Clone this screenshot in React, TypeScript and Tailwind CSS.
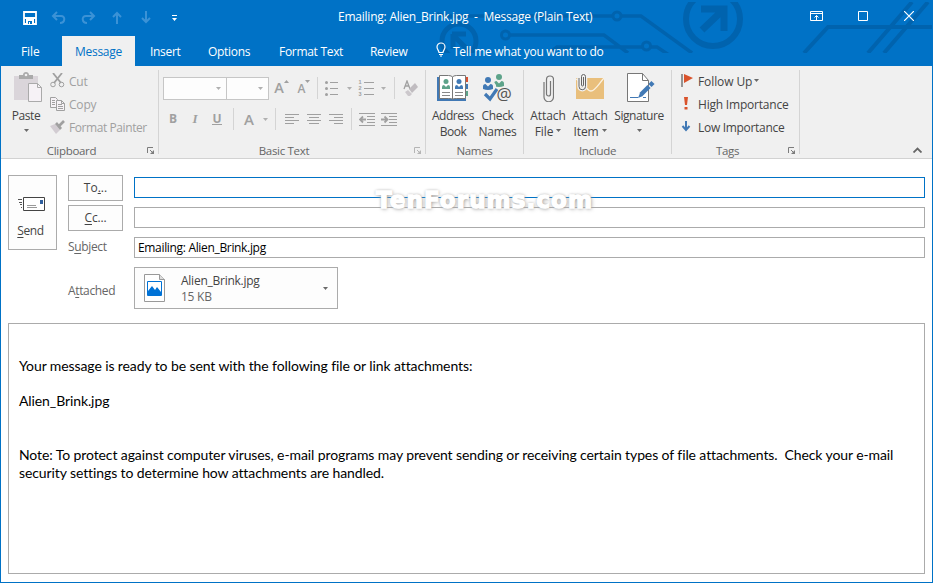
import type { ReactNode } from "react";

type Box = { w: number; h: number; className?: string; children: ReactNode };

function Svg({ w, h, className = "", children }: Box) {
  return (
    <svg width={w} height={h} viewBox={`0 0 ${w} ${h}`} fill="none" className={`block shrink-0 ${className}`}>
      {children}
    </svg>
  );
}

function Caret({ className = "text-[#6a6a6a]" }: { className?: string }) {
  return (
    <Svg w={5} h={3} className={className}>
      <path d="M0 0h5L2.5 3z" fill="currentColor" />
    </Svg>
  );
}

function Circuit() {
  return (
    <svg width="933" height="66" viewBox="0 0 933 66" fill="none" className="pointer-events-none absolute left-0 top-0" stroke="#0063ae" strokeWidth="4">
      <defs>
        <clipPath id="band"><rect y="2" width="932" height="51" /></clipPath>
      </defs>
      <g clipPath="url(#band)">
        <circle cx="459" cy="41" r="17" strokeWidth="5" />
        <path d="M452 34h14M454 36l15 15M453 34v15" strokeWidth="5" />
        <path d="M437 14l8 2h167M622 16h19l51 37" strokeWidth="3.5" />
        <circle cx="617" cy="16" r="4" strokeWidth="3" />
        <circle cx="505.5" cy="35" r="4" strokeWidth="3" />
        <path d="M510 35h94l24 18M549 53l8-6h85M651 47h6l12 8" strokeWidth="3.5" />
        <circle cx="646.5" cy="46" r="4" strokeWidth="3" />
        <circle cx="713" cy="19" r="27" strokeWidth="6" />
        <path d="M701 9h23v22M702 30l21-20" strokeWidth="7" />
        <path d="M804 53l24-26h104M868 53l44-51M884 53l44-51" />
      </g>
    </svg>
  );
}

function TitleBar() {
  return (
    <div className="relative flex h-9 text-white">
      <div className="flex h-[35px] w-[337px] items-center pl-[22px]">
        <Svg w={14} h={14}>
          <path d="M1 1h12v12H1z" stroke="#fff" strokeWidth="1.8" />
          <path d="M1 6h12v2H1zM3 8h8v5H3z" fill="#fff" />
          <path d="M5 10h4v3H7v-2H6v2H5z" fill="#0072c6" />
        </Svg>
        <Svg w={16} h={14} className="ml-[14px] text-[#3b92d6]">
          <path d="M6 1L2 5l4 4M2 5h8c5 0 4 7-1 7" stroke="currentColor" strokeWidth="2" />
        </Svg>
        <Svg w={16} h={14} className="ml-[13px] text-[#3b92d6]">
          <path d="M10 1l4 4-4 4M14 5H6C1 5 2 12 7 12" stroke="currentColor" strokeWidth="2" />
        </Svg>
        <Svg w={10} h={13} className="ml-4 text-[#3b92d6]">
          <path d="M5 13V2M1 6l4-4 4 4" stroke="currentColor" strokeWidth="2" />
        </Svg>
        <Svg w={10} h={13} className="ml-[19px] text-[#3b92d6]">
          <path d="M5 0v11M1 7l4 4 4-4" stroke="currentColor" strokeWidth="2" />
        </Svg>
        <Svg w={5} h={6} className="ml-[21px]">
          <path d="M0 0h5v1H0zM0 3h5L2.5 6z" fill="#fff" />
        </Svg>
      </div>
      <div className="h-8 w-[256px] whitespace-pre leading-[33px] tracking-[-0.23px]">Emailing: Alien_Brink.jpg  -  Message (Plain Text)</div>
      <div className="flex h-[32px] flex-1 items-center pl-[216px]">
        <Svg w={13} h={10}>
          <path d="M.5.5h12v9H.5zM0 2.5h13M6.5 9V4.5M4.5 6.5l2-2 2 2" stroke="#fff" />
        </Svg>
        <Svg w={10} h={10} className="ml-[35px]"><path d="M.5.5h9v9H.5z" stroke="#fff" /></Svg>
        <Svg w={10} h={10} className="ml-9"><path d="M0 0l10 10M10 0L0 10" stroke="#fff" strokeWidth="1.2" /></Svg>
      </div>
    </div>
  );
}

function Tabs() {
  return (
    <div className="relative flex h-[30px] text-white leading-[31px]">
      <div className="w-[61px] pl-5 tracking-[-0.1px]">File</div>
      <div className="w-[73px] bg-[#f0f0f0] text-center tracking-[-0.3px] text-[#0072c6]">Message</div>
      <div className="w-[58px] pl-[15px] tracking-[-0.3px]">Insert</div>
      <div className="w-[71px] pl-[15px] tracking-[-0.3px]">Options</div>
      <div className="w-[91px] pl-[15px] tracking-[-0.3px]">Format Text</div>
      <div className="w-[81px] pl-[15px] tracking-[-0.3px]">Review</div>
      <Svg w={10} h={15} className="mt-[6px]">
        <path d="M3 10.5C3 8.5 1 7.5 1 5a4 4 0 018 0c0 2.5-2 3.5-2 5.5zM3 12.500h4M4 14h2" stroke="#fff" strokeWidth="1.2" />
      </Svg>
      <div className="pl-[7px] tracking-[-0.27px]">Tell me what you want to do</div>
    </div>
  );
}

function Launcher({ className = "text-[#7c7c7c]" }: { className?: string }) {
  return (
    <Svg w={7} h={7} className={className}>
      <path d="M.5 6V.5H6M3 3l3 3" stroke="currentColor" />
      <path d="M7 3v4H3z" fill="currentColor" />
    </Svg>
  );
}

function Group({ label, width, children, launcher }: { label: string; width: string; children: ReactNode; launcher?: ReactNode }) {
  return (
    <>
      <div className={`flex shrink-0 flex-col ${width}`}>
        <div className="h-[76px]">{children}</div>
        <div className="flex h-4 items-center leading-4 text-[#666]">
          <span className="-mb-px flex-1 pt-px text-center text-[11.5px] tracking-[-0.3px]">{label}</span>
          {launcher && <span className="flex w-4 justify-center">{launcher}</span>}
        </div>
      </div>
      <div className="my-1 w-px shrink-0 bg-[#d4d4d4]" />
    </>
  );
}

function Tall({ width, icon, first, second, caret, tracking = "tracking-[-0.1px]" }: { width: string; icon: ReactNode; first: string; second?: string; caret?: boolean; tracking?: string }) {
  return (
    <div className={`flex shrink-0 flex-col items-center whitespace-nowrap leading-4 text-[#444] ${width} ${tracking}`}>
      <div className="flex h-[42px] items-center justify-center pt-px">{icon}</div>
      <div>{first}</div>
      <div className="flex h-4 items-center gap-[3px]">{second}{caret && <Caret className="mb-[3px] text-[#6a6a6a]" />}</div>
    </div>
  );
}

function Command({ icon, label, tracking, caret }: { icon: ReactNode; label: string; tracking: string; caret?: boolean }) {
  return (
    <div className="flex items-center">
      {icon}
      <span className={`-mb-px pl-1 pt-px ${tracking}`}>{label}</span>
      {caret && <Caret className="ml-[2px] text-[#6a6a6a]" />}
    </div>
  );
}

const lineSet = (xs: [number, number][]) => xs.map(([a, b], i) => `M${a} ${i * 3 + 0.5}H${b}`).join("");

function Align({ rows }: { rows: [number, number][] }) {
  return (
    <Cell w="w-[22px]">
      <Svg w={14} h={10}><path d={lineSet(rows)} stroke="#a0a0a0" /></Svg>
    </Cell>
  );
}

function Cell({ w, children }: { w: string; children: ReactNode }) {
  return <div className={`flex h-full shrink-0 items-center justify-center ${w}`}>{children}</div>;
}

function Rule({ w }: { w: string }) {
  return <Cell w={w}><div className="h-[22px] w-px shrink-0 bg-[#d4d4d4]" /></Cell>;
}

function Combo({ w }: { w: string }) {
  return (
    <div className={`flex h-[23px] shrink-0 items-center justify-end border border-[#c6c6c6] bg-[#fdfdfd] pr-[5px] ${w}`}>
      <Caret className="text-[#b0b0b0]" />
    </div>
  );
}

function Indent({ right }: { right?: boolean }) {
  return (
    <Cell w="w-[22px]">
      <Svg w={16} h={13}>
        <path d="M0 .5h16M8 3.500h8M8 6.500h8M8 9.500h8M0 12.500h16" stroke="#a0a0a0" />
        <path d={right ? "M0 6.500h6M3.500 3.500l3 3-3 3" : "M7 6.500H1M4 3.500l-3 3 3 3"} stroke="#a0a0a0" strokeWidth="1.8" />
      </Svg>
    </Cell>
  );
}

function Clipboard() {
  return (
    <Group label="Clipboard" width="w-[157px]" launcher={<Launcher />}>
      <div className="flex">
        <Tall width="w-[49px]" first="Paste" caret tracking="tracking-[-0.4px] pl-px" icon={
          <Svg w={29} h={31} className="ml-[5px]">
            <path d="M0 4h24v24H0z" fill="#dad5da" />
            <path d="M5 7V3h4c0-4 6-4 6 0h4v4z" fill="#aaa" />
            <circle cx="12" cy="3" r="1.3" fill="#f0f0f0" />
            <path d="M14.5 11.500h9l4 4v14h-13z" fill="#f6f2f6" stroke="#aaa" />
            <path d="M23.5 11.500v4h4" stroke="#aaa" />
          </Svg>
        } />
        <div className="pt-[3px] leading-[23px] text-[#a0a0a0]">
          <Command label="Cut" tracking="tracking-[-0.2px]" icon={
            <Svg w={15} h={15}>
              <path d="M3 0l8 10M12 0L4 10" stroke="#a0a0a0" strokeWidth="1.8" />
              <circle cx="3" cy="11.5" r="2.3" stroke="#a0a0a0" /><circle cx="11.5" cy="11.5" r="2.3" stroke="#a0a0a0" />
            </Svg>
          } />
          <Command label="Copy" tracking="tracking-[-0.2px]" icon={
            <Svg w={15} h={14}>
              <path d="M.5.5h5l2 2v8h-7z" fill="#f6f2f6" stroke="#a0a0a0" />
              <path d="M2 3.500h3M2 5.500h3M2 7.500h3" stroke="#a0a0a0" />
              <path d="M6.5 3.500h5l3 3v7h-8z" fill="#f6f2f6" stroke="#a0a0a0" />
              <path d="M11.5 3.500v3h3M8 7.500h4M8 9.500h5M8 11.500h5" stroke="#a0a0a0" />
            </Svg>
          } />
          <Command label="Format Painter" tracking="tracking-[-0.42px]" icon={
            <Svg w={15} h={14}>
              <path d="M0 6l5-2 5 6-4 4z" fill="#d2ccd2" />
              <path d="M5 4l2-2 5 6-2 2z" fill="#a0a0a0" />
              <path d="M9 6l5-5" stroke="#a0a0a0" strokeWidth="2.6" />
            </Svg>
          } />
        </div>
      </div>
    </Group>
  );
}

function BasicText() {
  return (
    <Group label="Basic Text" width="w-[266px]" launcher={<Launcher className="text-[#b5b5b5]" />}>
      <div className="flex h-[44px] items-center pl-1 text-[#a0a0a0]">
        <Combo w="w-[64px]" />
        <Combo w="-ml-px w-[43px]" />
        <Cell w="w-6"><span className="pl-px text-[14.5px] font-semibold">A</span><Svg w={5} h={3} className="mb-[13px]"><path d="M0 3l2.5-3L5 3z" fill="#a0a0a0" /></Svg></Cell>
        <Cell w="w-[22px]"><span className="pt-[2px] text-[12px] font-semibold">A</span><Svg w={5} h={3} className="mb-[13px]"><path d="M0 0l2.5 3L5 0z" fill="#a0a0a0" /></Svg></Cell>
        <Rule w="w-1" />
        <Cell w="w-[26px]">
          <Svg w={14} h={15}>
            <path d="M5 1.500h8M5 7.500h8M5 13.500h8" stroke="#a0a0a0" />
            <circle cx="1.5" cy="1.5" r="1.5" fill="#a0a0a0" /><circle cx="1.5" cy="7.5" r="1.5" fill="#a0a0a0" /><circle cx="1.5" cy="13.5" r="1.5" fill="#a0a0a0" />
          </Svg>
        </Cell>
        <Cell w="w-2"><Caret className="text-[#b0b0b0]" /></Cell>
        <Cell w="w-[26px]">
          <div className="flex flex-col font-['Liberation_Sans',sans-serif] text-[5.5px] font-bold leading-[6px]"><span>1</span><span>2</span><span>3</span></div>
          <Svg w={10} h={15} className="ml-[2px]"><path d="M0 1.500h10M0 7.500h10M0 13.500h10" stroke="#a0a0a0" /></Svg>
        </Cell>
        <Cell w="w-2"><Caret className="text-[#b0b0b0]" /></Cell>
        <Rule w="w-[14px]" />
        <Cell w="w-[18px]">
          <Svg w={15} h={16}>
            <path d="M1 9l3-8 3 8M2 6h4" stroke="#a0a0a0" strokeWidth="1.3" />
            <path d="M6 9l6-6 3 4-6 6z" fill="#c0bcc0" />
            <path d="M2 12l3-2 4 4-2 2H5z" fill="#ccc8cc" />
          </Svg>
        </Cell>
      </div>
      <div className="flex h-[18px] items-center pl-[3px] text-[#a0a0a0]">
        <Cell w="w-[22px]"><b>B</b></Cell>
        <Cell w="w-[22px]"><i className="font-['Liberation_Serif',serif] text-[13px] font-bold">I</i></Cell>
        <Cell w="w-[22px]"><b className="border-b border-[#a0a0a0] leading-[11px]">U</b></Cell>
        <Rule w="w-[10px]" />
        <Cell w="w-[22px]"><span className="text-[15px] font-semibold">A</span></Cell>
        <Cell w="w-[10px]"><Caret className="text-[#b0b0b0]" /></Cell>
        <Rule w="w-[11px]" />
        <Align rows={[[0, 14], [0, 9], [0, 14], [0, 9]]} />
        <Align rows={[[0, 14], [2, 12], [0, 14], [2, 12]]} />
        <Align rows={[[0, 14], [5, 14], [0, 14], [5, 14]]} />
        <Rule w="w-[9px]" />
        <Indent />
        <Indent right />
      </div>
    </Group>
  );
}

function Person({ x, y, color }: { x: number; y: number; color: string }) {
  return (
    <g transform={`translate(${x} ${y})`} fill={color}>
      <circle cx="5" cy="3" r="3" />
      <path d="M0 12V9.500q0-2.500 2.500-2.500L5 9.500 7.500 7q2.500 0 2.500 2.500V12q-5 2-10 0z" />
    </g>
  );
}

function Names() {
  return (
    <Group label="Names" width="w-[97px]">
      <div className="flex pl-[2px]">
        <Tall width="w-[50px]" first="Address" second="Book" tracking="tracking-[-0.45px]" icon={
          <Svg w={31} h={27} className="mr-[2px]">
            <path d="M0 3h29v24H0z" fill="#4179b5" />
            <path d="M27 3h4v5h-4z" fill="#d95030" /><path d="M27 10h4v5h-4z" fill="#4179b5" /><path d="M27 17h4v5h-4z" fill="#5da38a" />
            <path d="M2.500 1.500h9q4 0 4 2 0-2 4-2h9v23h-9q-4 0-4 1 0-1-4-1h-9z" fill="#fff" stroke="#777" />
            <path d="M15.500 3v22" stroke="#777" />
            <g transform="translate(5 5)"><circle cx="4" cy="2.500" r="2.500" fill="#5da38a" /><path d="M0 10V8q0-2 2-2l2 2 2-2q2 0 2 2v2z" fill="#5da38a" /></g>
            <g transform="translate(18 5)"><circle cx="4" cy="2.500" r="2.500" fill="#4179b5" /><path d="M0 10V8q0-2 2-2l2 2 2-2q2 0 2 2v2z" fill="#4179b5" /></g>
            <path d="M5 18.500h8M5 21.500h8M18 18.500h8M18 21.500h8" stroke="#888" />
          </Svg>
        } />
        <Tall width="w-[39px]" first="Check" second="Names" tracking="tracking-[-0.3px]" icon={
          <div className="relative pt-[2px]">
            <Svg w={31} h={31} className="ml-px">
              <Person x={11} y={1} color="#5da38a" />
              <path d="M-1 16V12q1-9 6-9t6 6l2 3v5z" fill="#f0f0f0" />
              <Person x={0} y={4} color="#4179b5" />
              <path d="M2 21l5 5 7-10" stroke="#f0f0f0" strokeWidth="6" />
              <path d="M2 21l5 5 7-10" stroke="#4179b5" strokeWidth="3.2" />
              <circle cx="23" cy="23" r="8.5" fill="#f0f0f0" />
            </Svg>
            <span className="absolute left-[15px] top-[13px] text-[17px] leading-5 tracking-normal text-[#555]">@</span>
          </div>
        } />
      </div>
    </Group>
  );
}

function Clip() {
  return (
    <Svg w={11} h={28}>
      <path d="M7.500 7v13a2 2 0 01-4 0V5.500a3.500 3.500 0 017 0V23a4.500 4.500 0 01-9.500 0V8" stroke="#777" strokeWidth="1.2" />
    </Svg>
  );
}

function Include() {
  return (
    <Group label="Include" width="w-[147px]">
      <div className="flex pl-[3px]">
        <Tall width="w-[42px]" first="Attach" second="File" caret icon={<Clip />} />
        <Tall width="w-[42px]" first="Attach" second="Item" caret icon={
          <Svg w={29} h={29} className="ml-px">
            <path d="M0 5h28v21H0z" fill="#e9bf7c" />
            <path d="M0 6c11 5 10 12 15 12 4 0 7-6 13-13" stroke="#fbf1df" strokeWidth="1.3" />
            <path d="M7.500 4v8a1 1 0 01-2 0V3.500a2 2 0 014 0v10a3 3 0 01-6.500 0V5" stroke="#f0f0f0" strokeWidth="3.5" />
            <path d="M7.500 4v8a1 1 0 01-2 0V3.500a2 2 0 014 0v10a3 3 0 01-6.500 0V5" stroke="#666" />
          </Svg>
        } />
        <Tall width="w-[56px]" first="Signature" caret tracking="tracking-[-0.45px]" icon={
          <Svg w={28} h={29} className="ml-[4px]">
            <path d="M.5.5h15l6 7v21H.5z" fill="#fff" stroke="#777" />
            <path d="M15.500.5v7h6" stroke="#777" />
            <path d="M3 24.500h8M16 24.500h3" stroke="#4179b5" />
            <path d="M11 25l2-5 3 3z" fill="#4179b5" />
            <path d="M14 21.500l8-8" stroke="#4179b5" strokeWidth="4.5" />
            <path d="M23 12.500l3-3" stroke="#4179b5" strokeWidth="4.5" />
          </Svg>
        } />
      </div>
    </Group>
  );
}

function Tags() {
  return (
    <Group label="Tags" width="w-[127px]" launcher={<Launcher />}>
      <div className="pl-[9px] pt-[3px] leading-[23px] text-[#444]">
        <Command label="Follow Up" caret tracking="tracking-[-0.1px]" icon={
          <Svg w={13} h={15}><path d="M1 1v13" stroke="#777" strokeWidth="1.5" /><path d="M3 1l9 4-9 5z" fill="#d9532c" /></Svg>
        } />
        <Command label="High Importance" tracking="tracking-[-0.2px]" icon={
          <Svg w={13} h={13}><path d="M3 0h4L6 8H4zM3.500 10h3v2.500h-3z" fill="#d9532c" /></Svg>
        } />
        <Command label="Low Importance" tracking="tracking-[-0.3px]" icon={
          <Svg w={13} h={13}><path d="M5 1v9M1.500 6L5 10l3.500-4" stroke="#4179b5" strokeWidth="2" /></Svg>
        } />
      </div>
    </Group>
  );
}

function Ribbon() {
  return (
    <div className="relative flex h-[93px] border-b border-[#d2d2d2] bg-[#f0f0f0]">
      <Clipboard />
      <BasicText />
      <Names />
      <Include />
      <Tags />
      <div className="flex flex-1 items-end justify-end pb-[5px] pr-[10px]">
        <Svg w={9} h={6}><path d="M.5 5.500l4-4 4 4" stroke="#666" strokeWidth="1.8" /></Svg>
      </div>
    </div>
  );
}

function Header() {
  return (
    <div className="relative flex pl-[7px] pr-[7px] pt-4">
      <div className="flex h-[75px] w-[49px] shrink-0 flex-col items-center border border-[#ababab] bg-[#fdfdfd] pt-[21px] text-[#444]">
        <Svg w={28} h={15} className="mr-px">
          <path d="M0 2.500h4M1 5.500h3M2 7.500h2M3 10.500h1" stroke="#555" />
          <path d="M5.500.5h21v13h-21z" fill="#fff" stroke="#444" />
          <path d="M9 8.500h9M9 10.500h10" stroke="#999" /><path d="M22 3h3v4h-3z" fill="#2f5f9e" />
        </Svg>
        <span className="mr-[4px] pt-[11px] leading-4 tracking-[-0.4px]"><u className="underline-offset-2">S</u>end</span>
      </div>
      <div className="ml-[11px] flex w-[55px] shrink-0 flex-col leading-6 tracking-[-0.35px] text-[#666]">
        <div className="h-[26px] border border-[#ababab] bg-[#fdfdfd] text-center tracking-normal text-[#444]">To<u>.</u>..</div>
        <div className="mt-1 h-[26px] border border-[#ababab] bg-[#fdfdfd] text-center tracking-[-0.2px] text-[#444]"><u className="underline-offset-2">C</u>c...</div>
        <div className="mt-1">S<u className="underline-offset-2">u</u>bject</div>
        <div className="mt-5">A<u className="underline-offset-2">t</u>tached</div>
      </div>
      <div className="ml-[11px] flex flex-1 flex-col gap-[9px] pt-[2px]">
        <div className="h-[21px] border border-[#0072c6]" />
        <div className="h-[21px] border border-[#ababab]" />
        <div className="h-[21px] border border-[#ababab] pl-[3px] leading-[19px] tracking-[-0.33px] text-black">Emailing: Alien_Brink.jpg</div>
        <div className="flex h-[42px] w-[204px] items-center border border-[#ababab] bg-[#fdfdfd] pl-[9px] pr-[9px]">
          <Svg w={21} h={28}>
            <path d="M.5.5h15l5 5v22H.5z" fill="#fff" stroke="#999" /><path d="M15.500.5v5h5" fill="#ddd" stroke="#999" />
            <path d="M3.500 7.500h14v14h-14z" fill="#fff" stroke="#0072d6" />
            <path d="M4 17l4-5 3 4 2-3 4 5v3H4z" fill="#0072d6" />
          </Svg>
          <div className="ml-[16px] flex-1 pt-[2px] leading-4 tracking-[-0.25px] text-[#444]">
            <div>Alien_Brink.jpg</div>
            <div className="text-[#666]">15 KB</div>
          </div>
          <Caret />
        </div>
      </div>
      <div className="absolute left-[375px] top-[27px] whitespace-nowrap font-['DejaVu_Sans',sans-serif] text-[23px] font-bold leading-7 tracking-[1.1px] text-white [-webkit-text-stroke:1.4px_white] [text-shadow:0_0_3px_#999,1px_1px_4px_#aaa]">
        TenForums.com
      </div>
    </div>
  );
}

function Message() {
  return (
    <div className="ml-[7px] mr-[7px] mt-[14px] h-[251px] border border-[#ababab] pl-[10px] pt-[33px] font-['Lato','Open_Sans',sans-serif] text-[14px] leading-[18px] tracking-[-0.1px] text-black">
      <p className="whitespace-nowrap">Your message is ready to be sent with the following file or link attachments:</p>
      <p className="mt-[17px]">Alien_Brink.jpg</p>
      <p className="mt-9 whitespace-pre">{"Note: To protect against computer viruses, e-mail programs may prevent sending or receiving certain types of file attachments.  Check your e-mail\nsecurity settings to determine how attachments are handled."}</p>
    </div>
  );
}

export default function App() {
  return (
    <div className="relative h-[583px] w-[933px] overflow-hidden border-x border-b border-[#0072c6] bg-white font-['Open_Sans','Noto_Sans',sans-serif] text-[12px]">
      <div className="relative -mx-px bg-[#0072c6] px-px">
        <Circuit />
        <TitleBar />
        <Tabs />
      </div>
      <Ribbon />
      <Header />
      <Message />
    </div>
  );
}
